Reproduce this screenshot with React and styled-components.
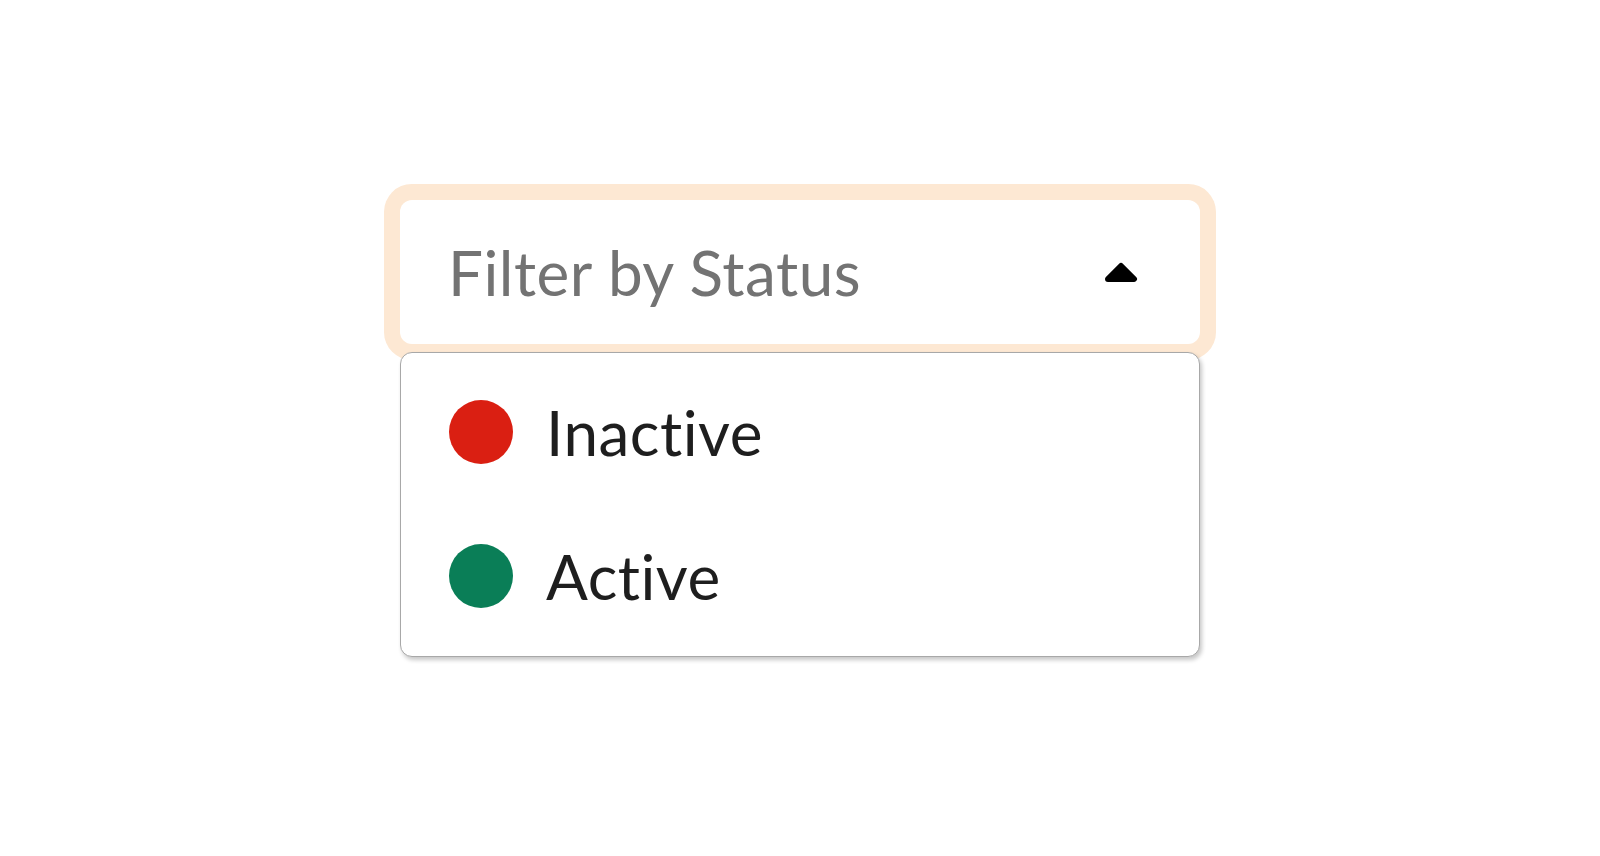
import React, { useState } from 'react';
import styled, { createGlobalStyle } from 'styled-components';

const GlobalStyle = createGlobalStyle`
  body {
    margin: 0;
    background: #ffffff;
    font-family: 'Lato', 'Liberation Sans', sans-serif;
  }
`;

const Page = styled.div`
  min-height: 856px;
  display: flex;
  justify-content: center;
  align-items: flex-start;
  padding-top: 200px;
  box-sizing: border-box;
`;

const SelectWrap = styled.div`
  position: relative;
  width: 800px;
`;

const Trigger = styled.button`
  width: 100%;
  height: 144px;
  display: flex;
  align-items: center;
  justify-content: space-between;
  padding: 0 62px 0 48px;
  box-sizing: border-box;
  background: #ffffff;
  border: none;
  border-radius: 12px;
  box-shadow: 0 0 0 16px #fde8d3;
  font-family: inherit;
  cursor: pointer;
`;

const Placeholder = styled.span`
  font-size: 62px;
  font-weight: 400;
  color: #737373;
  letter-spacing: 0.5px;
`;

const Menu = styled.ul`
  position: absolute;
  top: calc(100% + 8px);
  left: 0;
  width: 100%;
  margin: 0;
  padding: 7px 0 8px;
  list-style: none;
  box-sizing: border-box;
  background: #ffffff;
  border: 1px solid #a8a8a8;
  border-radius: 12px;
  box-shadow: 2px 3px 4px rgba(0, 0, 0, 0.22);
`;

const Option = styled.li`
  height: 144px;
  display: flex;
  align-items: center;
  gap: 33px;
  padding: 0 48px;
  cursor: pointer;
`;

const Dot = styled.span`
  width: 64px;
  height: 64px;
  border-radius: 50%;
  background: ${props => props.color};
  flex-shrink: 0;
`;

const Label = styled.span`
  font-size: 62px;
  color: #1e1e1e;
  letter-spacing: 0.5px;
`;

const Caret = () => (
  <svg width="34" height="22" viewBox="0 0 34 22">
    <path
      d="M4 18 L17 5 L30 18 Z"
      fill="#000"
      stroke="#000"
      strokeWidth="6"
      strokeLinejoin="round"
    />
  </svg>
);

const statuses = [
  { label: 'Inactive', color: '#da1f12' },
  { label: 'Active', color: '#0a7e57' },
];

export default function App() {
  const [open, setOpen] = useState(true);

  return (
    <Page>
      <GlobalStyle />
      <SelectWrap>
        <Trigger onClick={() => setOpen(!open)}>
          <Placeholder>Filter by Status</Placeholder>
          <Caret />
        </Trigger>
        {open && (
          <Menu>
            {statuses.map(s => (
              <Option key={s.label}>
                <Dot color={s.color} />
                <Label>{s.label}</Label>
              </Option>
            ))}
          </Menu>
        )}
      </SelectWrap>
    </Page>
  );
}
